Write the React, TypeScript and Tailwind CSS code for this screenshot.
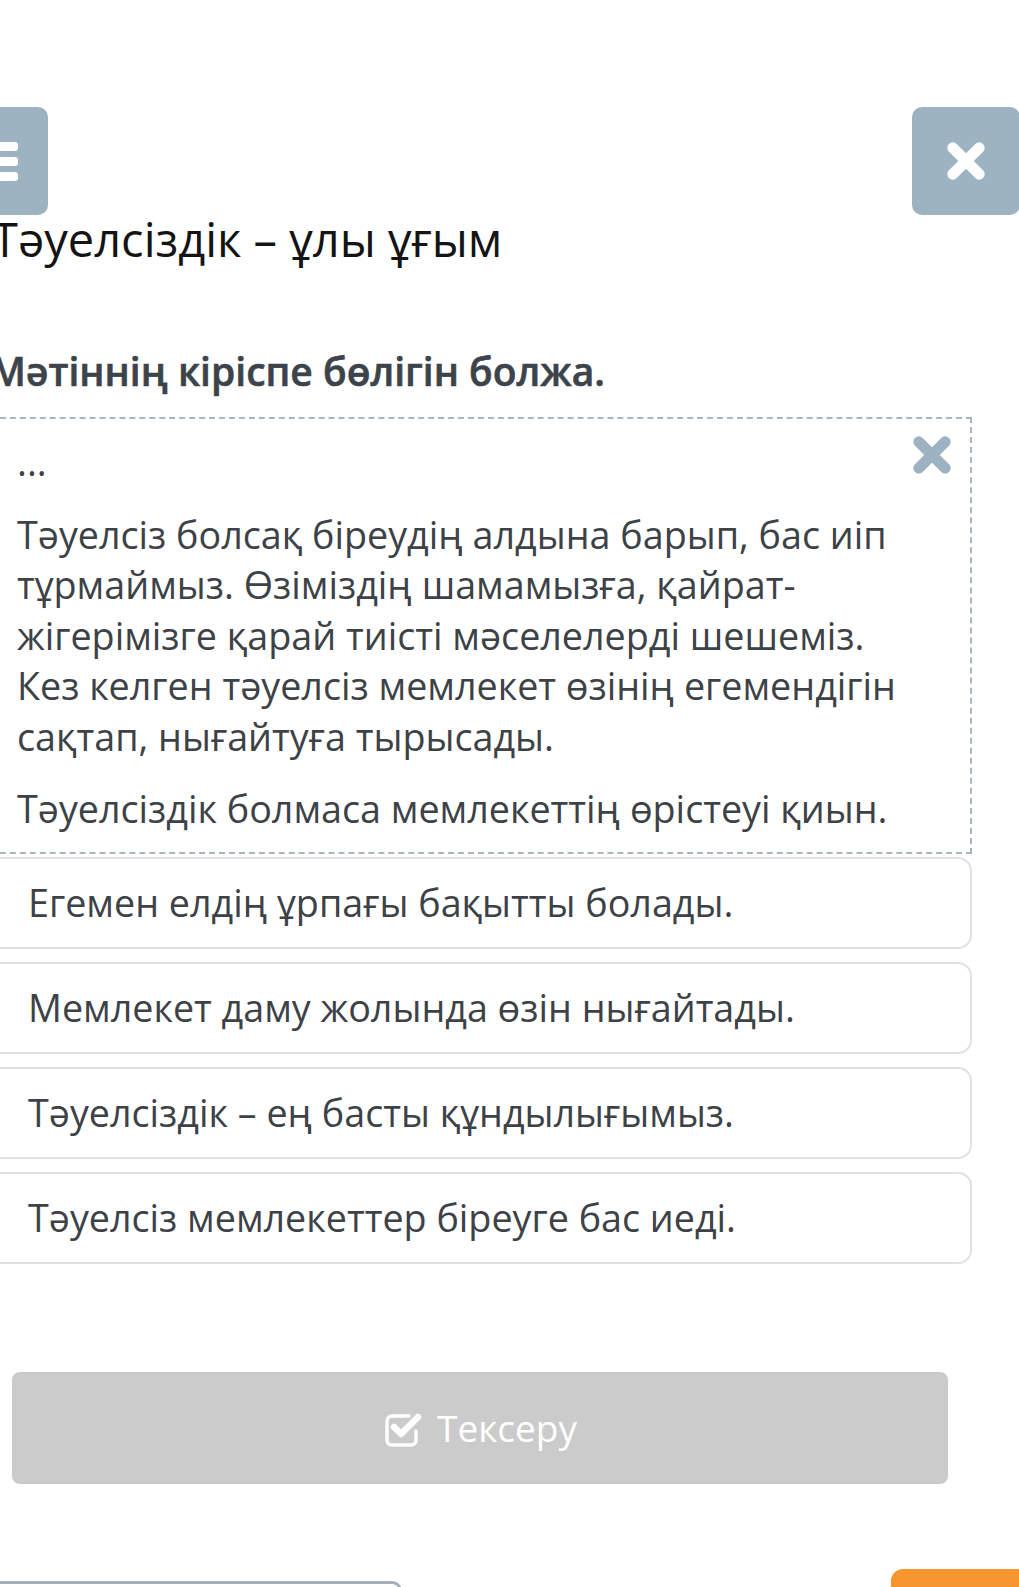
import React from 'react'

const options = [
  'Егемен елдің ұрпағы бақытты болады.',
  'Мемлекет даму жолында өзін нығайтады.',
  'Тәуелсіздік – ең басты құндылығымыз.',
  'Тәуелсіз мемлекеттер біреуге бас иеді.',
]

function CrossIcon({ className, stroke }: { className?: string; stroke: string }) {
  return (
    <svg viewBox="0 0 40 40" className={className}>
      <path d="M8 8 L32 32 M32 8 L8 32" stroke={stroke} strokeWidth="10" strokeLinecap="round" fill="none" />
    </svg>
  )
}

function CheckSquareIcon() {
  return (
    <svg viewBox="0 0 40 38" className="w-[40px] h-[38px]">
      <path
        d="M26 7 H9 a5 5 0 0 0 -5 5 v19 a5 5 0 0 0 5 5 h19 a5 5 0 0 0 5 -5 v-9"
        stroke="#fff"
        strokeWidth="3.5"
        fill="none"
        strokeLinecap="round"
      />
      <path
        d="M11 18 L18 25 L35 8"
        stroke="#fff"
        strokeWidth="6.5"
        fill="none"
        strokeLinecap="round"
        strokeLinejoin="round"
      />
    </svg>
  )
}

export default function App() {
  return (
    <div className="w-[1019px] h-[1587px] overflow-hidden bg-white font-['Open_Sans',sans-serif]">
      <div className="-ml-[60px] w-[1080px]">
        {/* top bar */}
        <div className="flex justify-between pt-[107px]">
          <button className="w-[108px] h-[108px] rounded-[10px] bg-[#9db3c1] flex flex-col items-center justify-center gap-[6px]">
            <span className="block w-[48px] h-[9px] rounded-[3px] bg-white" />
            <span className="block w-[48px] h-[9px] rounded-[3px] bg-white" />
            <span className="block w-[48px] h-[9px] rounded-[3px] bg-white" />
          </button>
          <button className="w-[108px] h-[108px] rounded-[10px] bg-[#9db3c1] flex items-center justify-center">
            <CrossIcon className="w-[44px] h-[44px]" stroke="#fff" />
          </button>
        </div>

        <h1 className="-mt-[4px] pl-[52px] text-[47px] leading-[56px] text-[#141414] font-normal">
          Тәуелсіздік – ұлы ұғым
        </h1>

        <h2 className="mt-[78px] pl-[50px] text-[39px] leading-[52px] font-semibold text-[#3c434a] [-webkit-text-stroke:0.6px_#3c434a]">
          Мәтіннің кіріспе бөлігін болжа.
        </h2>

        {/* dropped answer area */}
        <div className="relative mt-[20px] ml-[40px] w-[992px] border-2 border-dashed border-[#a9b6c0] pl-[35px] pr-[60px] pt-[18px] pb-[17px] text-[37.7px] leading-[50.5px] text-[#3d4247]">
          <p>...</p>
          <p className="mt-[22px]">
            Тәуелсіз болсақ біреудің алдына барып, бас иіп
            <br />
            тұрмаймыз. Өзіміздің шамамызға, қайрат-
            <br />
            жігерімізге қарай тиісті мәселелерді шешеміз.
            <br />
            Кез келген тәуелсіз мемлекет өзінің егемендігін
            <br />
            сақтап, нығайтуға тырысады.
          </p>
          <p className="mt-[22px]">Тәуелсіздік болмаса мемлекеттің өрістеуі қиын.</p>
          <CrossIcon className="absolute right-[16px] top-[14px] w-[44px] h-[44px]" stroke="#9db3c1" />
        </div>

        {/* options */}
        <div className="mt-[3px] flex flex-col gap-[13px]">
          {options.map((opt) => (
            <div
              key={opt}
              className="ml-[40px] w-[992px] h-[92px] flex items-center rounded-[14px] border-2 border-[#dfe2e5] pl-[46px] text-[37.7px] leading-[52px] text-[#3d4247]"
            >
              {opt}
            </div>
          ))}
        </div>

        <button className="mt-[108px] ml-[72px] w-[936px] h-[112px] rounded-[8px] bg-[#cbcbcb] flex items-center justify-center gap-[14px] text-white text-[37px] leading-[50px]">
          <CheckSquareIcon />
          <span>Тексеру</span>
        </button>

        {/* footer buttons, cut by the viewport */}
        <div className="mt-[85px] flex justify-between items-start">
          <div className="mt-[12px] w-[462px] h-[40px] rounded-tr-[10px] border-t-[3px] border-r-[3px] border-[#a3b0b9]" />
          <div className="w-[129px] h-[40px] rounded-tl-[12px] bg-[#f7962f]" />
        </div>
      </div>
    </div>
  )
}
